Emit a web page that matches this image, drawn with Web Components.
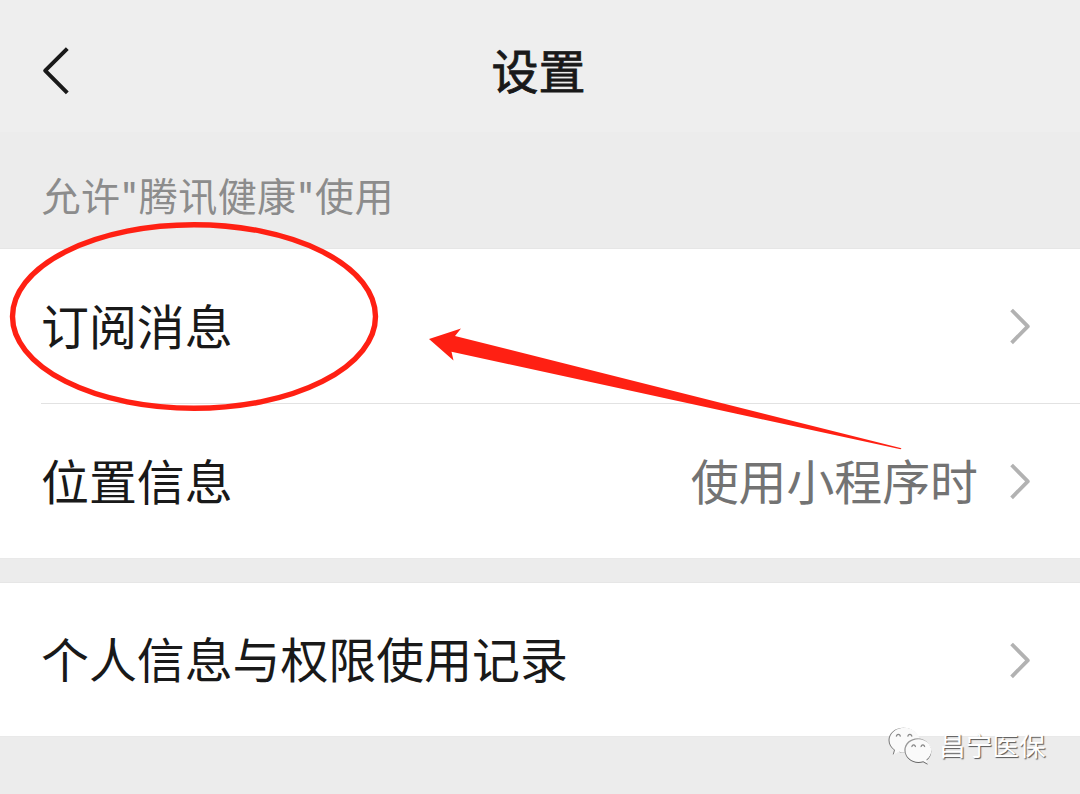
<!DOCTYPE html>
<html lang="zh-CN">
<head>
<meta charset="utf-8">
<title>设置</title>
<style>
  body {
    margin: 0;
    background: #ececec;
    font-family: "Noto Sans CJK SC", sans-serif;
    color: #191919;
  }
</style>
</head>
<body>
<settings-page>
  <nav-bar slot="header">设置</nav-bar>
  <settings-group>
    <span slot="label">允许"腾讯健康"使用</span>
    <settings-row>订阅消息</settings-row>
    <settings-row>位置信息<span slot="value">使用小程序时</span></settings-row>
  </settings-group>
  <settings-group>
    <settings-row>个人信息与权限使用记录</settings-row>
  </settings-group>
  <red-marks slot="overlay"></red-marks>
  <account-mark slot="overlay">昌宁医保</account-mark>
</settings-page>

<script>
// Helper ------------------------------------------------------------
function define(name, html) {
  const template = document.createElement('template');
  template.innerHTML = html;

  customElements.define(name, class extends HTMLElement {
    constructor() {
      super();
      this.attachShadow({ mode: 'open' });
      this.shadowRoot.appendChild(template.content.cloneNode(true));
    }
  });
}

// Page --------------------------------------------------------------
define('settings-page', `
  <style>
    :host {
      display: block;
      position: relative;
      height: 794px;
      overflow: hidden;
    }

    main {
      display: flex;
      flex-direction: column;
      gap: 23px;
    }
  </style>

  <slot name="header"></slot>
  <main><slot></slot></main>
  <slot name="overlay"></slot>
`);

// Nav bar -----------------------------------------------------------
define('nav-bar', `
  <style>
    :host {
      display: grid;
      grid-template-columns: 120px 1fr 120px;
      align-items: center;
      height: 132px;
      background: #eee;
    }

    svg {
      display: block;
      margin: 9px 0 0 40px;
    }

    h1 {
      margin: 5px 0 0;
      padding-right: 3px;
      font-size: 47px;
      font-weight: 400;
      line-height: 60px;
      text-align: center;
      -webkit-text-stroke: 0.8px currentColor;
    }
  </style>

  <svg width="32" height="52" viewBox="0 0 32 52" fill="none" stroke="#191919" stroke-width="4">
    <path d="M27.3 3.6 5.2 25.6l22.1 22.2" stroke-linejoin="round"/>
  </svg>
  <h1><slot></slot></h1>
`);

// Group with optional label -----------------------------------------
define('settings-group', `
  <style>
    :host {
      display: block;
    }

    ::slotted([slot="label"]) {
      display: block;
      height: 116px;
      padding: 36px 41.5px 0;
      box-sizing: border-box;
      font-family: Inter, "Noto Sans CJK SC", sans-serif;
      font-size: 39px;
      line-height: 58px;
      letter-spacing: 0.4px;
      color: #8c8c8c;
    }

    .rows {
      border-top: 1px solid #e6e6e6;
      border-bottom: 1px solid #e9e9e9;
      background: #fff;
    }
  </style>

  <slot name="label"></slot>
  <div class="rows"><slot></slot></div>
`);

// Row ---------------------------------------------------------------
define('settings-row', `
  <style>
    :host {
      display: block;
      padding-left: 41px;
    }

    .row {
      display: flex;
      align-items: center;
      height: 154px;
      padding-right: 47px;
      font-size: 47.9px;
      line-height: 70px;
    }

    :host(:not(:last-child)) .row {
      border-bottom: 1px solid #e2e2e2;
    }

    :host(:only-of-type) .row {
      height: 153px;
    }

    .title,
    .value {
      padding-bottom: 5px;
    }

    .title {
      flex: 1;
    }

    .value {
      color: #737373;
    }

    svg {
      display: block;
      margin-left: 29px;
    }
  </style>

  <div class="row">
    <div class="title"><slot></slot></div>
    <div class="value"><slot name="value"></slot></div>
    <svg width="26" height="40" viewBox="0 0 26 40" fill="none" stroke="#b2b2b2" stroke-width="3.8">
      <path d="M4.6 4 20.8 20.4 4.6 36.8" stroke-linejoin="round"/>
    </svg>
  </div>
`);

// Hand-drawn ellipse and arrow --------------------------------------
define('red-marks', `
  <style>
    :host {
      position: absolute;
      inset: 0;
      pointer-events: none;
    }
  </style>

  <svg width="1080" height="794" viewBox="0 0 1080 794">
    <ellipse cx="194" cy="316.5" rx="181.5" ry="91.8" fill="none" stroke="#ff2013" stroke-width="5.4"/>
    <path fill="#ff2013" d="M429 339 461 328.5 455 336 901.5 448.3 900.5 449.3 451.5 351.8 453.5 360.5Z"/>
  </svg>
`);

// Account watermark -------------------------------------------------
define('account-mark', `
  <style>
    :host {
      position: absolute;
      left: 887px;
      top: 723px;
      display: flex;
      align-items: center;
      gap: 6px;
      font-size: 26.7px;
      line-height: 44px;
      color: #fff;
      text-shadow: 1px 1px 1px #555;
    }

    svg {
      display: block;
      overflow: visible;
    }

    .bubble {
      fill: #fafafa;
      filter: drop-shadow(-0.5px 0.9px 0.5px #777);
    }

    .front {
      filter: drop-shadow(0.3px 1px 0.5px #666) drop-shadow(-0.5px -0.5px 0.5px #999);
    }
  </style>

  <svg width="46" height="44" viewBox="0 0 46 44">
    <path class="bubble" d="M17.5 4.7C9 4.7 2.5 10.2 2.5 17.3c0 4.200 2.200 7.500 5.500 9.700l-1.300 4.700 5.500-2.900c1.800.6 3.500.8 5.300.8C26 29.600 32.500 24 32.500 17.200S26 4.700 17.500 4.700Z"/>
    <path class="bubble front" d="M31.500 16.300c-7.300 0-13 5-13 11.300s5.700 11.400 13 11.400c1.700 0 3.300-.2 4.700-.7l4.500 2.400-1.200-4.100c3-2.200 4.800-5.300 4.800-9 0-6.300-5.700-11.300-12.800-11.300Z"/>
    <g fill="none" stroke="#888" stroke-width="1.300">
      <path d="M9.500 13.700a1.900 1.900 0 1 1 3.700 0M21 13.700a1.900 1.900 0 1 1 3.700 0M25 24a1.700 1.700 0 1 1 3.300 0M34.200 24a1.700 1.700 0 1 1 3.300 0"/>
    </g>
  </svg>
  <span><slot></slot></span>
`);
</script>
</body>
</html>
